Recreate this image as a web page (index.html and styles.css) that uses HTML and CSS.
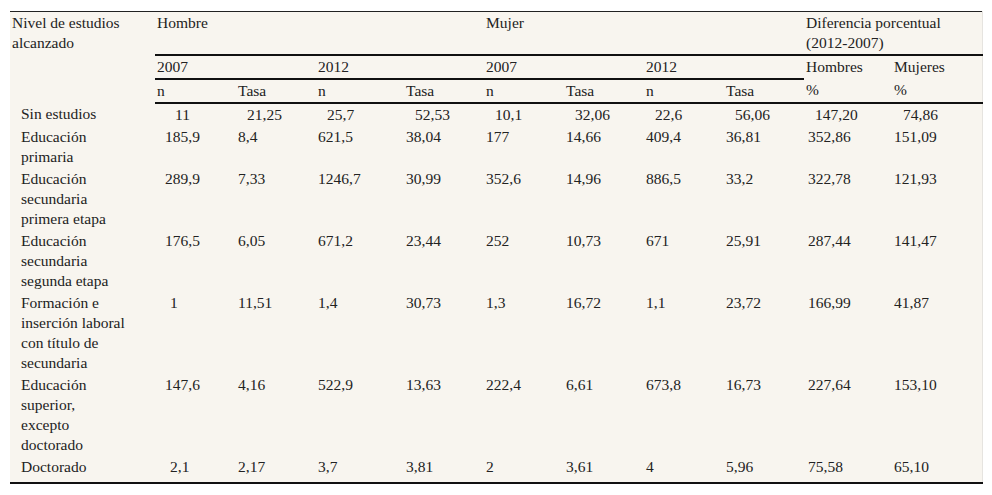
FILE: index.html
```html
<!DOCTYPE html>
<html lang="es">
<head>
<meta charset="utf-8">
<title>Tabla</title>
<link rel="stylesheet" href="styles.css">
</head>
<body>
<div class="wrap">
<table class="tbl">
  <colgroup>
    <col class="c0"><col class="c1"><col class="c2"><col class="c3"><col class="c4"><col class="c5"><col class="c6"><col class="c7"><col class="c8"><col class="c9"><col class="c10">
  </colgroup>
  <thead>
    <tr>
      <th rowspan="3" class="first">Nivel de estudios alcanzado</th>
      <th colspan="4" class="line">Hombre</th>
      <th colspan="4" class="line">Mujer</th>
      <th colspan="2" class="line">Diferencia porcentual (2012-2007)</th>
    </tr>
    <tr>
      <th colspan="2" class="line">2007</th>
      <th colspan="2" class="line">2012</th>
      <th colspan="2" class="line">2007</th>
      <th colspan="2" class="line">2012</th>
      <th>Hombres</th>
      <th>Mujeres</th>
    </tr>
    <tr class="last-head">
      <th>n</th><th>Tasa</th><th>n</th><th>Tasa</th><th>n</th><th>Tasa</th><th>n</th><th>Tasa</th><th>%</th><th>%</th>
    </tr>
  </thead>
  <tbody>
    <tr class="r-first">
      <td class="lbl"><div>Sin estudios</div></td>
      <td>11</td><td>21,25</td><td>25,7</td><td>52,53</td><td>10,1</td><td>32,06</td><td>22,6</td><td>56,06</td><td>147,20</td><td>74,86</td>
    </tr>
    <tr>
      <td class="lbl"><div>Educación primaria</div></td>
      <td class="n1">185,9</td><td>8,4</td><td>621,5</td><td>38,04</td><td>177</td><td>14,66</td><td>409,4</td><td>36,81</td><td class="p1">352,86</td><td>151,09</td>
    </tr>
    <tr>
      <td class="lbl"><div>Educación secundaria primera etapa</div></td>
      <td class="n1">289,9</td><td>7,33</td><td>1246,7</td><td>30,99</td><td>352,6</td><td>14,96</td><td>886,5</td><td>33,2</td><td class="p1">322,78</td><td>121,93</td>
    </tr>
    <tr>
      <td class="lbl"><div>Educación secundaria segunda etapa</div></td>
      <td class="n1">176,5</td><td>6,05</td><td>671,2</td><td>23,44</td><td>252</td><td>10,73</td><td>671</td><td>25,91</td><td class="p1">287,44</td><td>141,47</td>
    </tr>
    <tr>
      <td class="lbl"><div>Formación e inserción laboral con título de secundaria</div></td>
      <td class="n2">1</td><td>11,51</td><td>1,4</td><td>30,73</td><td>1,3</td><td>16,72</td><td>1,1</td><td>23,72</td><td class="p1">166,99</td><td>41,87</td>
    </tr>
    <tr>
      <td class="lbl"><div>Educación superior, excepto doctorado</div></td>
      <td class="n1">147,6</td><td>4,16</td><td>522,9</td><td>13,63</td><td>222,4</td><td>6,61</td><td>673,8</td><td>16,73</td><td class="p1">227,64</td><td>153,10</td>
    </tr>
    <tr class="r-last">
      <td class="lbl"><div>Doctorado</div></td>
      <td class="n2">2,1</td><td>2,17</td><td>3,7</td><td>3,81</td><td>2</td><td>3,61</td><td>4</td><td>5,96</td><td class="p1">75,58</td><td>65,10</td>
    </tr>
  </tbody>
</table>
</div>
</body>
</html>
```

FILE: styles.css
```css
html, body {
  margin: 0;
  padding: 0;
  background: #ffffff;
}

.wrap {
  padding: 11px 10px 0 10px;
}

.tbl {
  width: 972px;
  border-collapse: collapse;
  table-layout: fixed;
  background: #f8f5ef;
  font-family: "Liberation Serif", "Times New Roman", serif;
  font-size: 15.5px;
  line-height: 20px;
  color: #222;
  border-top: 1px solid #222;
  border-bottom: 2px solid #111;
  border-right: 1px solid #e6e4e0;
}

.c0 { width: 145px; }
.c1 { width: 81px; }
.c2 { width: 80px; }
.c3 { width: 88px; }
.c4 { width: 80px; }
.c5 { width: 80px; }
.c6 { width: 80px; }
.c7 { width: 80px; }
.c8 { width: 80px; }
.c9 { width: 88px; }
.c10 { width: 90px; }

.tbl th {
  font-weight: normal;
  text-align: left;
  vertical-align: top;
  padding: 1px 2px;
}

.tbl th.line {
  border-bottom: 2px solid #111;
}

.tbl .last-head th {
  border-bottom: 2px solid #111;
}

.tbl td {
  text-align: left;
  vertical-align: top;
  padding: 1px 2px;
  white-space: nowrap;
}

.tbl td.lbl {
  padding-left: 11px;
  white-space: normal;
}

.tbl td.lbl div {
  width: 105px;
}

.tbl td.n1 {
  padding-left: 10px;
}

.tbl td.n2 {
  padding-left: 15px;
}

.tbl td.p1 {
  padding-left: 4px;
}

.tbl .r-first td {
  padding-left: 11px;
}

.tbl .r-first td.lbl {
  padding-left: 11px;
}

.tbl .r-first td:nth-child(2) {
  padding-left: 20px;
}

.tbl .r-last td {
  padding-bottom: 5px;
}
```
